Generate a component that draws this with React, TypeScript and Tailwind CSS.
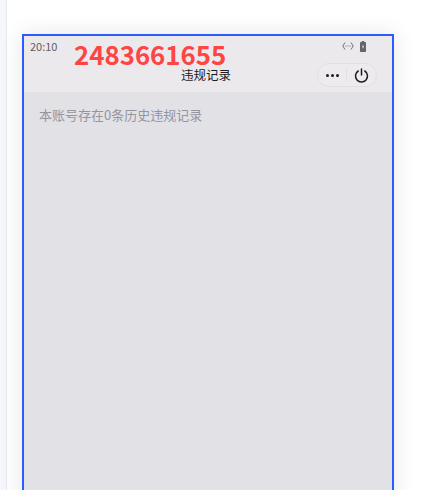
const FONT = "font-['Noto_Sans_CJK_SC','Noto_Sans',sans-serif]"

function Wifi() {
  return (
    <svg width="12" height="10" viewBox="0 0 12 10" fill="none" stroke="#6f6d72" strokeWidth="1">
      <path d="M3 1.5 0.8 5 3 8.5" />
      <path d="M9 1.5 11.2 5 9 8.5" />
      <path d="M3.5 5h5" strokeDasharray="1 1" />
    </svg>
  )
}

function Battery() {
  return (
    <svg width="6" height="11" viewBox="0 0 6 11">
      <rect x="1.8" y="0" width="2.4" height="1.2" fill="#66646a" />
      <rect x="0" y="1" width="6" height="10" rx="0.8" fill="#66646a" />
      <path d="M3.4 3 1.9 6.2h1.2L2.6 8.6 4.2 5.2H3z" fill="#e8e6e9" />
    </svg>
  )
}

function Power() {
  return (
    <svg width="15" height="15" viewBox="0 0 15 15" fill="none" stroke="#1c1c1e" strokeWidth="1.5" strokeLinecap="round">
      <path d="M7.5 1v6" />
      <path d="M4.2 3A6 6 0 1 0 10.8 3" />
    </svg>
  )
}

export default function App() {
  return (
    <div className={`flex h-[490px] w-[426px] overflow-hidden bg-white ${FONT}`}>
      <div className="h-full w-[7px] shrink-0 border-r border-[#e6e9f2] bg-[#f6f7fb]" />
      <div className="pl-[15px] pt-[34px]">
        <div className="relative flex h-[500px] w-[372px] flex-col border-2 border-[#2b5cff] bg-[#e2e1e6] shadow-[0_0_22px_rgba(0,0,0,0.1)]">
          <header className="h-[56px] shrink-0 bg-[#ece9ec]">
            <div className="flex h-[20px] items-center justify-between pl-[6px] pr-[26px]">
              <span className="text-[11px] leading-none text-[#5f5d62]">20:10</span>
              <div className="flex items-center gap-[6px]">
                <Wifi />
                <Battery />
              </div>
            </div>
            <div className="relative flex h-[36px] items-start justify-center">
              <span className="mt-[10px] pr-[4px] text-[12.5px] leading-[18px] text-[#1c1c1e]">违规记录</span>
              <div className="absolute right-[15px] top-[7px] flex h-[24px] w-[60px] items-center rounded-full border border-[#e3e0e4] bg-[#eeebee]">
                <div className="flex w-[28px] items-center justify-center gap-[2px]">
                  <span className="size-[3px] rounded-full bg-[#1c1c1e]" />
                  <span className="size-[3px] rounded-full bg-[#1c1c1e]" />
                  <span className="size-[3px] rounded-full bg-[#1c1c1e]" />
                </div>
                <div className="h-[14px] w-px bg-[#e3e0e4]" />
                <div className="flex flex-1 items-center justify-center">
                  <Power />
                </div>
              </div>
            </div>
          </header>
          <p className="px-[15px] pt-[14px] text-[13px] leading-[18px] text-[#9694a0]">本账号存在0条历史违规记录</p>
          <div className="absolute left-[50px] top-[0px] text-[25.8px] font-bold leading-[36px] text-[#ff4444]">2483661655</div>
        </div>
      </div>
    </div>
  )
}
